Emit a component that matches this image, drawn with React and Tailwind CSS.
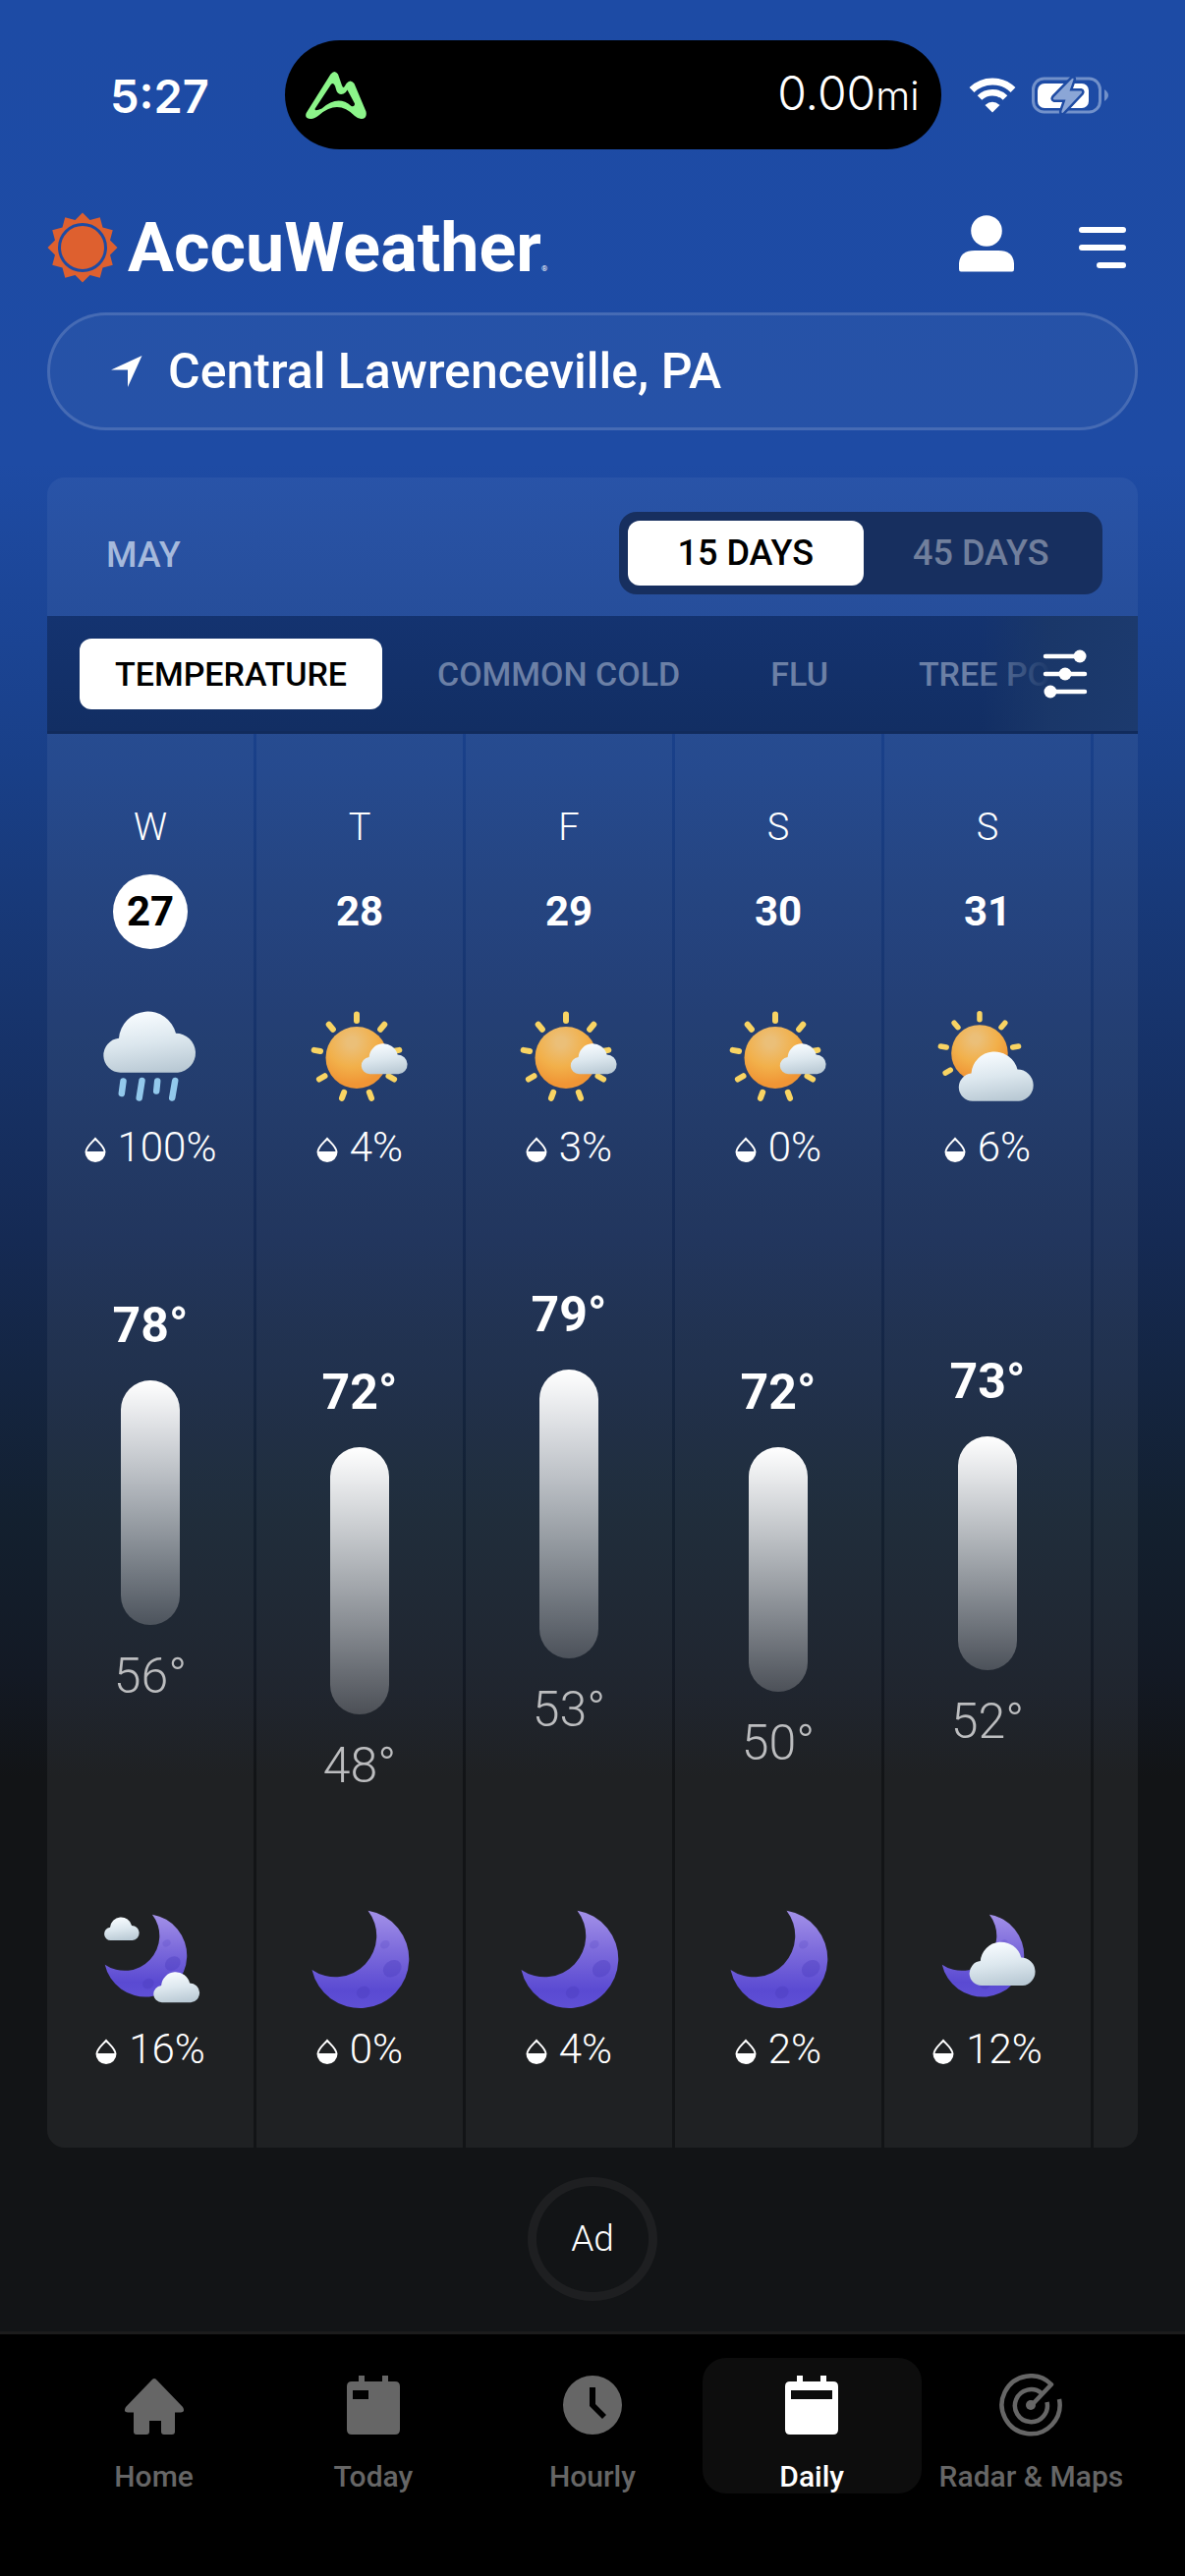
import { useState } from "react";

const PX_PER_DEGREE = 11.32;
const TOP_TEMP = 79;

const days = [
  { letter: "W", date: 27, icon: "rain", rain: 100, high: 78, low: 56, nightIcon: "moonClouds", nightRain: 16 },
  { letter: "T", date: 28, icon: "mostlySunny", rain: 4, high: 72, low: 48, nightIcon: "moon", nightRain: 0 },
  { letter: "F", date: 29, icon: "mostlySunny", rain: 3, high: 79, low: 53, nightIcon: "moon", nightRain: 4 },
  { letter: "S", date: 30, icon: "mostlySunny", rain: 0, high: 72, low: 50, nightIcon: "moon", nightRain: 2 },
  { letter: "S", date: 31, icon: "partlySunny", rain: 6, high: 73, low: 52, nightIcon: "moonCloud", nightRain: 12 },
];

const tabs = ["TEMPERATURE", "COMMON COLD", "FLU", "TREE POLLEN"];
const ranges = ["15 DAYS", "45 DAYS"];

// shared gradients for the weather icons
function IconDefs() {
  return (
    <svg className="absolute h-0 w-0" aria-hidden="true">
      <defs>
        <linearGradient id="cloud" x1="0.4" y1="0" x2="0.6" y2="1">
          <stop offset="0" stopColor="#f8fcff" />
          <stop offset="0.5" stopColor="#dce7ee" />
          <stop offset="1" stopColor="#b9c9d4" />
        </linearGradient>
        <radialGradient id="sun" cx="0.42" cy="0.25" r="0.8">
          <stop offset="0.1" stopColor="#ebbf78" />
          <stop offset="0.5" stopColor="#f2b04a" />
          <stop offset="0.85" stopColor="#f09535" />
        </radialGradient>
        <linearGradient id="moon" x1="0" y1="0" x2="0" y2="1">
          <stop offset="0" stopColor="#a391e8" />
          <stop offset="0.4" stopColor="#7e6cdc" />
          <stop offset="0.82" stopColor="#5a4ad2" />
          <stop offset="1" stopColor="#5f50d6" />
        </linearGradient>
      </defs>
    </svg>
  );
}

function Cloud({ transform }) {
  return (
    <path
      transform={transform}
      fill="url(#cloud)"
      d="M19.5 65.7A17.5 17.5 0 0 1 18 30.8A29.5 29.5 0 0 1 76 25.8A20 20 0 0 1 78 65.7Z"
    />
  );
}

function Sun({ transform }) {
  const rays = [0, 40, 80, 120, 160, 200, 240, 280, 320];
  return (
    <g transform={transform}>
      {rays.map((angle) => (
        <rect key={angle} x="44" y="3.5" width="6" height="12.5" rx="3" fill="#f9d463" transform={`rotate(${angle} 47 50.5)`} />
      ))}
      <circle cx="47" cy="50.5" r="31.5" fill="url(#sun)" />
    </g>
  );
}

function Moon({ transform }) {
  return (
    <g transform={transform}>
      <path d="M58.5 .7A50 50 0 1 1 1.5 61A42 42 0 0 0 58.5 .7Z" fill="url(#moon)" />
      <g fill="#4a3bbf" fillOpacity="0.4">
        <ellipse cx="75.8" cy="35.3" rx="5" ry="4" transform="rotate(-30 75.8 35.3)" fillOpacity="0.2" />
        <ellipse cx="83.2" cy="59.7" rx="10" ry="8" transform="rotate(-35 83.2 59.7)" />
        <ellipse cx="53.7" cy="84" rx="7" ry="6" transform="rotate(-30 53.7 84)" />
      </g>
    </g>
  );
}

function WeatherIcon({ name }) {
  return (
    <svg viewBox="0 0 100 100" className="size-[100px] overflow-visible" aria-hidden="true">
      {name === "rain" && (
        <>
          <Cloud />
          <path d="M22.5 74.5L20.8 87M41.5 74L38.7 91.5M57.2 74.5L56.2 84.5M75.2 74L72.2 91.5" stroke="#93c9ec" strokeWidth="6.5" strokeLinecap="round" />
        </>
      )}
      {name === "mostlySunny" && (
        <>
          <Sun />
          <Cloud transform="translate(50.6 34.5) scale(.5)" />
        </>
      )}
      {name === "partlySunny" && (
        <>
          <Sun transform="translate(-1 -.2) scale(.914)" />
          <Cloud transform="translate(18.9 41.6) scale(.81)" />
        </>
      )}
      {name === "moon" && <Moon />}
      {name === "moonCloud" && (
        <>
          <Moon transform="translate(2.5 4.1) scale(.845)" />
          <Cloud transform="translate(29.9 30.1) scale(.715)" />
        </>
      )}
      {name === "moonClouds" && (
        <>
          <Moon transform="translate(2.5 4.1) scale(.845)" />
          <Cloud transform="translate(2.2 6.1) scale(.38)" />
          <Cloud transform="translate(52.1 61.5) scale(.5)" />
        </>
      )}
    </svg>
  );
}

function Precip({ value }) {
  return (
    <div className="mt-[14px] flex items-center justify-center gap-3 text-[42px] leading-[56px] font-light">
      <svg viewBox="0 0 22 26" className="mt-1 h-[26px] w-[22px]" aria-hidden="true">
        <path d="M11 2C14.5 6 20.5 10.5 20.5 15.6A9.5 9.3 0 0 1 1.5 15.6C1.5 10.5 7.5 6 11 2Z" fill="none" stroke="#fff" strokeWidth="2" />
        <path d="M1.5 15H20.5A9.5 9.8 0 0 1 1.5 15Z" fill="#fff" />
      </svg>
      {value}%
    </div>
  );
}

function DayColumn({ day, selected }) {
  const offset = Math.round((TOP_TEMP - day.high) * PX_PER_DEGREE);
  const barHeight = Math.round((day.high - day.low) * PX_PER_DEGREE);

  return (
    <div className="flex flex-col items-center bg-white/6 pt-[71px] pb-[72px]">
      <div className="text-[38px] leading-[48px] font-light">{day.letter}</div>
      <div
        className={`mt-6 flex size-[76px] items-center justify-center rounded-full text-[42px] leading-none font-bold ${
          selected ? "bg-white text-black" : ""
        }`}
      >
        {day.date}
      </div>
      <div className="mt-[60px]">
        <WeatherIcon name={day.icon} />
      </div>
      <Precip value={day.rain} />
      <div className="mt-[112px] h-[519px]">
        <div className="flex flex-col items-center" style={{ paddingTop: offset }}>
          <div className="text-[50px] leading-[60px] font-bold">{day.high}°</div>
          <div
            className="mt-[26px] w-[60px] rounded-full bg-linear-to-b from-white to-white/20"
            style={{ height: barHeight }}
          />
          <div className="mt-[22px] text-[50px] leading-[60px] font-light text-[#bcbdbf]">{day.low}°</div>
        </div>
      </div>
      <div className="mt-[117px]">
        <WeatherIcon name={day.nightIcon} />
      </div>
      <Precip value={day.nightRain} />
    </div>
  );
}

function StatusBar() {
  return (
    <div className="flex items-start justify-between pt-[41px] pr-[78px] pl-[112px]">
      <div className="mt-[27px] w-[176px] font-['Inter',sans-serif] text-[47px] leading-[60px] font-semibold">5:27</div>
      <div className="flex h-[111px] max-w-[668px] flex-1 items-center justify-between rounded-full bg-black pr-[22px] pl-5">
        <svg viewBox="0 0 64 50" className="h-[50px] w-16" aria-hidden="true">
          <path
            fill="#8cf58a"
            fillRule="evenodd"
            d="M1.700 43L26.500 3.500Q30.500 -1.500 34 3.500L38 15Q39.500 18.500 41 15.500L42.500 13Q46.500 8 50.500 13L62.500 41.500Q64 48.500 57.500 49Q54.500 49 51 46Q34 28.500 15 45Q10 49 6.500 49Q-.5 49 1.700 43ZM10.700 38.500L27 13.800Q29.500 11.500 31 15.500L32.500 20.500Q34.500 25 39.500 23.500Q42 22.500 43.500 19.500L51 33.500Q51 37 47.500 36Q34 24 17.500 38.500Q9.500 42 10.700 38.500Z"
          />
        </svg>
        <div className="font-['Inter',sans-serif] text-[48px] leading-[60px] font-light">
          0.00<span className="text-[40px]">mi</span>
        </div>
      </div>
      <div className="mt-[37px] ml-[27px] flex items-center gap-4">
        <svg viewBox="0 0 48 36" className="h-9 w-12" aria-hidden="true">
          <path d="M3 12.500A30 30 0 0 1 45 12.500" fill="none" stroke="#fff" strokeWidth="7" />
          <path d="M11 20.500A18.500 18.500 0 0 1 37 20.500" fill="none" stroke="#fff" strokeWidth="6.500" />
          <path d="M16.500 28Q24 21.500 31.500 28L24 35.500Z" fill="#fff" />
        </svg>
        <svg viewBox="0 0 78 38" className="h-[38px] w-[78px]" aria-hidden="true">
          <rect x="1.500" y="2" width="68" height="34" rx="11" fill="none" stroke="#7291ca" strokeWidth="3" />
          <rect x="6" y="7" width="52" height="25" rx="7" fill="#fff" />
          <path d="M74 13Q78 16 78 19T74 25Z" fill="#7291ca" />
          <path
            d="M41 2Q43 1 42.500 3L38.500 14.500H50Q52 15 50.500 17L32 36.500Q30 38 30.500 35L34.500 23.500H23Q21 23 22.500 21Z"
            fill="#8ba6d6"
            stroke="#1e4ba3"
            strokeWidth="5"
            paintOrder="stroke"
          />
        </svg>
      </div>
    </div>
  );
}

function Logo() {
  const points = [];
  for (let i = 0; i < 24; i++) {
    const radius = i % 2 === 0 ? 35.5 : 29;
    const angle = (i * Math.PI) / 12;
    points.push(`${36 + radius * Math.sin(angle)},${36 - radius * Math.cos(angle)}`);
  }

  return (
    <h1 className="flex items-center gap-[10px]">
      <svg viewBox="0 0 72 72" className="size-[72px]" aria-hidden="true">
        <polygon points={points.join(" ")} fill="#de602f" />
        <circle cx="36" cy="36" r="23.500" fill="none" stroke="#1e4ba3" strokeWidth="3" />
      </svg>
      <span className="text-[70px] leading-[80px] font-bold">
        AccuWeather<span className="text-[8px] leading-none font-normal">®</span>
      </span>
    </h1>
  );
}

function Header() {
  return (
    <header className="px-12">
      <div className="mt-[60px] flex items-center justify-between pr-3">
        <Logo />
        <div className="flex items-center gap-[66px]">
          <button type="button" aria-label="Profile">
            <svg viewBox="0 0 56 66" className="h-[66px] w-14 fill-white">
              <circle cx="28" cy="16" r="15.800" />
              <path d="M0 55V49Q1 36 16 36H40Q55 36 56 49V55Q56 57.500 54 57.500H2Q0 57.500 0 55Z" />
            </svg>
          </button>
          <button type="button" aria-label="Menu">
            <svg viewBox="0 0 48 42" className="h-[42px] w-12">
              <path d="M3 3H45M3 21H45M21 39H45" stroke="#fff" strokeWidth="6" strokeLinecap="round" />
            </svg>
          </button>
        </div>
      </div>
      <button
        type="button"
        className="mt-[26px] flex h-[120px] w-full items-center gap-[26px] rounded-full border-3 border-white/15 bg-white/4 px-[62px] text-[50px] leading-[60px] font-medium"
      >
        <svg viewBox="0 0 32 32" className="size-8 fill-white" aria-hidden="true">
          <path d="M31.500 0L17 32V14.500L0 14.500Z" />
        </svg>
        Central Lawrenceville, PA
      </button>
    </header>
  );
}

function ForecastCard() {
  const [range, setRange] = useState(ranges[0]);
  const [tab, setTab] = useState(tabs[0]);

  return (
    <section className="mx-12 mt-12 overflow-hidden rounded-[18px]">
      <div className="flex h-[141px] items-center justify-between bg-white/5 pr-9 pl-[60px]">
        <h2 className="mt-4 text-[36px] leading-[48px] font-medium text-[#a5b9dc]">MAY</h2>
        <div className="mt-3 flex h-[84px] w-[492px] items-center rounded-[18px] bg-[#172f5f] py-[9px] pr-1 pl-[9px]">
          {ranges.map((r) => (
            <button
              key={r}
              type="button"
              aria-pressed={range === r}
              onClick={() => setRange(r)}
              className={`h-full flex-1 rounded-xl text-[36px] leading-[48px] font-medium ${
                range === r ? "bg-white text-black" : "text-[#717f9c]"
              }`}
            >
              {r}
            </button>
          ))}
        </div>
      </div>

      <div className="relative h-[120px] overflow-hidden border-b-3 border-[#112b5c] bg-linear-to-b from-[#143370] to-[#122e63]">
        <div className="flex h-full items-center gap-5 pl-[33px]">
          {tabs.map((t) => (
            <button
              key={t}
              type="button"
              aria-pressed={tab === t}
              onClick={() => setTab(t)}
              className={`h-[72px] shrink-0 rounded-xl px-9 text-[34px] leading-[48px] font-medium whitespace-nowrap ${
                tab === t ? "bg-white text-black" : "text-[#6c80a6]"
              }`}
            >
              {t}
            </button>
          ))}
        </div>
        <div className="absolute inset-y-0 right-0 flex w-[160px] items-center justify-end bg-linear-to-r from-transparent via-[#1a3769] via-45% to-[#1c3a6e] pr-[51px]">
          <button type="button" aria-label="Filter options">
            <svg viewBox="0 0 46 50" className="h-[50px] w-[46px] fill-white">
              <path d="M3 7H42M3 25H43M6 43H43" stroke="#fff" strokeWidth="4.500" strokeLinecap="round" />
              <circle cx="38" cy="7" r="6.500" />
              <circle cx="23" cy="25" r="6.500" />
              <circle cx="8" cy="43" r="6.500" />
            </svg>
          </button>
        </div>
      </div>

      <div className="grid grid-cols-[repeat(5,210fr)_45fr] gap-[3px]">
        {days.map((day) => (
          <DayColumn key={day.date} day={day} selected={day.date === 27} />
        ))}
        <div className="bg-white/6" />
      </div>
    </section>
  );
}

const navItems = [
  {
    label: "Home",
    icon: <path d="M32 5Q33.500 5 35 7L61 34Q64 39 59 39.500H53V59Q53 62 50 62H42Q39 62 39 59V48H27V59Q27 62 24 62H14Q11 62 11 59V39.500H5Q0 39 3 34L29 7Q30.500 5 32 5Z" />,
  },
  {
    label: "Today",
    icon: <path fillRule="evenodd" d="M17 2H23V8H41V2H47V8H54Q59 8 59 13V57Q59 62 54 62H10Q5 62 5 57V13Q5 8 10 8H17ZM11 17V26H27V17Z" />,
  },
  {
    label: "Hourly",
    icon: <path fillRule="evenodd" d="M32 2A30 30 0 1 1 32 62A30 30 0 1 1 32 2ZM29 14V33L42 46L46 42L35 31V14Z" />,
  },
  {
    label: "Daily",
    icon: <path fillRule="evenodd" d="M17 2H23V8H41V2H47V8H54Q59 8 59 13V57Q59 62 54 62H10Q5 62 5 57V13Q5 8 10 8H17ZM11 17V26H53V17Z" />,
  },
  {
    label: "Radar & Maps",
    icon: (
      <>
        <path
          d="M61 26A29.500 29.500 0 1 1 53 11L34 31M48.500 29A16.500 16.500 0 1 1 43 20"
          fill="none"
          stroke="currentColor"
          strokeWidth="4.500"
          strokeLinejoin="round"
        />
        <circle cx="32" cy="32" r="5" />
      </>
    ),
  },
];

function BottomNav() {
  return (
    <nav className="grid grid-cols-5 border-t-3 border-[#1c1c1c] bg-black px-[45px] pt-6 pb-[84px]">
      {navItems.map((item) => (
        <a
          key={item.label}
          href="#"
          aria-current={item.label === "Daily" ? "page" : undefined}
          className={`flex h-[138px] flex-col items-center rounded-3xl pt-4 ${
            item.label === "Daily" ? "bg-[#0d0d0d] text-white" : "text-[#666]"
          }`}
        >
          <svg viewBox="0 0 64 64" className="size-16 fill-current" aria-hidden="true">
            {item.icon}
          </svg>
          <span className="mt-6 text-[30px] leading-[34px] font-medium whitespace-nowrap">{item.label}</span>
        </a>
      ))}
    </nav>
  );
}

export default function App() {
  return (
    <div className="flex min-h-screen flex-col bg-[#121416] bg-[linear-gradient(180deg,#1d4ba5_0%,#1e4ba4_18%,#193f87_30%,#152a54_48%,#13202f_59%,#131924_65%,#121416_69%)] font-['Roboto',sans-serif] text-white">
      <IconDefs />
      <StatusBar />
      <Header />
      <main className="flex-1">
        <ForecastCard />
        <div className="mx-auto mt-[30px] mb-[30px] flex h-[126px] w-[132px] items-center justify-center rounded-[50%] border-9 border-[#1e1f21] text-[37px] leading-[48px] font-light">
          Ad
        </div>
      </main>
      <BottomNav />
    </div>
  );
}
